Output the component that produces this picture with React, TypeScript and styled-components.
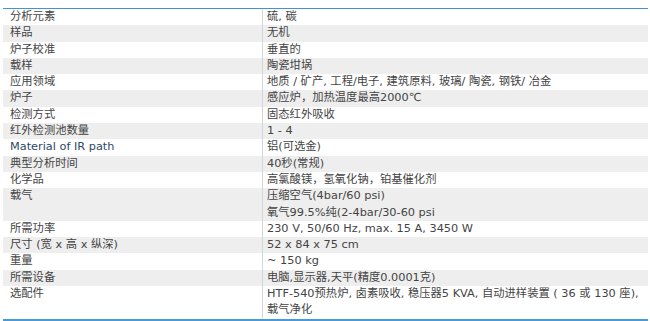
import React from "react";
import styled, { createGlobalStyle } from "styled-components";

const Global = createGlobalStyle`
  html, body { margin: 0; padding: 0; background: #ffffff; }
  body {
    font-family: "DejaVu Sans", "Noto Sans CJK SC", sans-serif;
    font-size: 11.3px;
    color: #444444;
  }
`;

const Page = styled.div`
  padding: 8px 2px 0 3px;
`;

const Table = styled.div`
  display: grid;
  grid-template-columns: 259px 1fr;
  border-top: 1px solid #3f93d6;
  border-bottom: 2px solid #4a9ad8;
`;

const Row = styled.div<{ $striped: boolean }>`
  display: contents;
  & > div {
    background: ${(p) => (p.$striped ? "#eeeeee" : "#ffffff")};
  }
`;

const Label = styled.div<{ $latin?: boolean }>`
  padding-left: 7px;
  line-height: 16.3px;
  white-space: nowrap;
  color: ${(p) => (p.$latin ? "#2d4a68" : "#444444")};
`;

const Value = styled.div`
  padding-left: 4px;
  line-height: 16.3px;
  border-left: 1px solid #cfd6dc;
  white-space: nowrap;
`;

const rows: { label: string; value: string[]; latin?: boolean }[] = [
  { label: "分析元素", value: ["硫, 碳"] },
  { label: "样品", value: ["无机"] },
  { label: "炉子校准", value: ["垂直的"] },
  { label: "载样", value: ["陶瓷坩埚"] },
  { label: "应用领域", value: ["地质 / 矿产, 工程/电子, 建筑原料, 玻璃/ 陶瓷, 钢铁/ 冶金"] },
  { label: "炉子", value: ["感应炉，加热温度最高2000℃"] },
  { label: "检测方式", value: ["固态红外吸收"] },
  { label: "红外检测池数量", value: ["1 - 4"] },
  { label: "Material of IR path", value: ["铝(可选金)"], latin: true },
  { label: "典型分析时间", value: ["40秒(常规)"] },
  { label: "化学品", value: ["高氯酸镁，氢氧化钠，铂基催化剂"] },
  { label: "载气", value: ["压缩空气(4bar/60 psi)", "氧气99.5%纯(2-4bar/30-60 psi"] },
  { label: "所需功率", value: ["230 V, 50/60 Hz, max. 15 A, 3450 W"] },
  { label: "尺寸 (宽 x 高 x 纵深)", value: ["52 x 84 x 75 cm"] },
  { label: "重量", value: ["~ 150 kg"] },
  { label: "所需设备", value: ["电脑,显示器,天平(精度0.0001克)"] },
  { label: "选配件", value: ["HTF-540预热炉, 卤素吸收, 稳压器5 KVA, 自动进样装置 ( 36 或 130 座),", "载气净化"] },
];

export default function App() {
  return (
    <>
      <Global />
      <Page>
        <Table>
          {rows.map((r, i) => (
            <Row key={i} $striped={i % 2 === 1}>
              <Label $latin={r.latin}>{r.label}</Label>
              <Value>
                {r.value.map((v, j) => (
                  <div key={j}>{v}</div>
                ))}
              </Value>
            </Row>
          ))}
        </Table>
      </Page>
    </>
  );
}
